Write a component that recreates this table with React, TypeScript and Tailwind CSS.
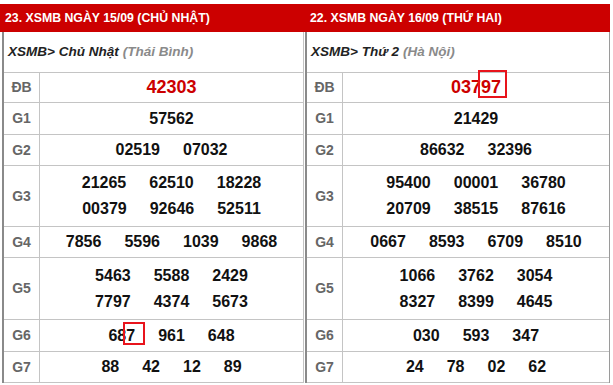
import type { ReactNode } from "react";

type Row = {
	label: string;
	lines: ReactNode[][];
	h: string;
	red?: boolean;
};

type Panel = {
	title: string;
	day: string;
	place: string;
	rows: Row[];
};

function Mark({ children, box }: { children: ReactNode; box: string }) {
	return (
		<span className="relative">
			{children}
			<span className={`absolute border-2 border-[#e8141c] ${box}`} />
		</span>
	);
}

const panels: Panel[] = [
	{
		title: "23. XSMB NGÀY 15/09 (CHỦ NHẬT)",
		day: "Chủ Nhật",
		place: "(Thái Bình)",
		rows: [
			{ label: "ĐB", lines: [["42303"]], h: "h-[30px]", red: true },
			{ label: "G1", lines: [["57562"]], h: "h-[32px]" },
			{ label: "G2", lines: [["02519", "07032"]], h: "h-[31px]" },
			{
				label: "G3",
				lines: [
					["21265", "62510", "18228"],
					["00379", "92646", "52511"],
				],
				h: "h-[61px]",
			},
			{ label: "G4", lines: [["7856", "5596", "1039", "9868"]], h: "h-[31px]" },
			{
				label: "G5",
				lines: [
					["5463", "5588", "2429"],
					["7797", "4374", "5673"],
				],
				h: "h-[62px]",
			},
			{
				label: "G6",
				lines: [
					[
						<span key="687">
							68
							<Mark box="-left-[3px] -right-[10px] -top-[5px] -bottom-[1px]">7</Mark>
						</span>,
						"961",
						"648",
					],
				],
				h: "h-[32px]",
			},
			{ label: "G7", lines: [["88", "42", "12", "89"]], h: "h-[31px]" },
		],
	},
	{
		title: "22. XSMB NGÀY 16/09 (THỨ HAI)",
		day: "Thứ 2",
		place: "(Hà Nội)",
		rows: [
			{
				label: "ĐB",
				lines: [
					[
						<span key="03797">
							037
							<Mark box="-left-[3px] -right-[6px] -top-[7px] -bottom-[1px]">97</Mark>
						</span>,
					],
				],
				h: "h-[30px]",
				red: true,
			},
			{ label: "G1", lines: [["21429"]], h: "h-[32px]" },
			{ label: "G2", lines: [["86632", "32396"]], h: "h-[31px]" },
			{
				label: "G3",
				lines: [
					["95400", "00001", "36780"],
					["20709", "38515", "87616"],
				],
				h: "h-[61px]",
			},
			{ label: "G4", lines: [["0667", "8593", "6709", "8510"]], h: "h-[31px]" },
			{
				label: "G5",
				lines: [
					["1066", "3762", "3054"],
					["8327", "8399", "4645"],
				],
				h: "h-[62px]",
			},
			{ label: "G6", lines: [["030", "593", "347"]], h: "h-[32px]" },
			{ label: "G7", lines: [["24", "78", "02", "62"]], h: "h-[31px]" },
		],
	},
];

function ResultPanel({ panel, body }: { panel: Panel; body: string }) {
	return (
		<div className="flex w-[305px] flex-col">
			<div className="flex h-[28px] items-center bg-[#cc0000] pl-[5px] text-[12.3px] font-bold text-white">
				{panel.title}
			</div>
			<div className={`border-r border-l-2 border-l-[#8a8a8a] ${body}`}>
				<div className="flex h-[41px] items-center border-b border-[#c4c4c4] pl-[4px] text-[13.5px] font-bold italic">
					<span className="text-[#222]">XSMB&gt; {panel.day}</span>
					<span className="ml-[4px] text-[#8a8a8a]">{panel.place}</span>
				</div>
				{panel.rows.map((row) => (
					<div key={row.label} className={`flex border-b border-[#c4c4c4] ${row.h}`}>
						<div className="flex w-[36px] items-center justify-center border-r border-[#c4c4c4] text-[14px] font-bold text-[#666]">
							{row.label}
						</div>
						<div
							className={`flex flex-1 flex-col items-center justify-center font-bold ${
								row.red ? "text-[18px] text-[#cc0000]" : "text-[16px] leading-[26px] text-[#111]"
							}`}
						>
							{row.lines.map((line, i) => (
								<div key={i} className="flex gap-[23px]">
									{line.map((n, j) => (
										<span key={j}>{n}</span>
									))}
								</div>
							))}
						</div>
					</div>
				))}
			</div>
		</div>
	);
}

export default function App() {
	return (
		<div className="h-[385px] w-[613px] overflow-hidden bg-white pt-[4px] font-['Liberation_Sans',Arial,sans-serif]">
			<div className="flex">
				<ResultPanel panel={panels[0]} body="ml-[2px] mr-[1px] border-r-[#c4c4c4]" />
				<ResultPanel panel={panels[1]} body="border-r-[#9a9a9a]" />
			</div>
		</div>
	);
}
